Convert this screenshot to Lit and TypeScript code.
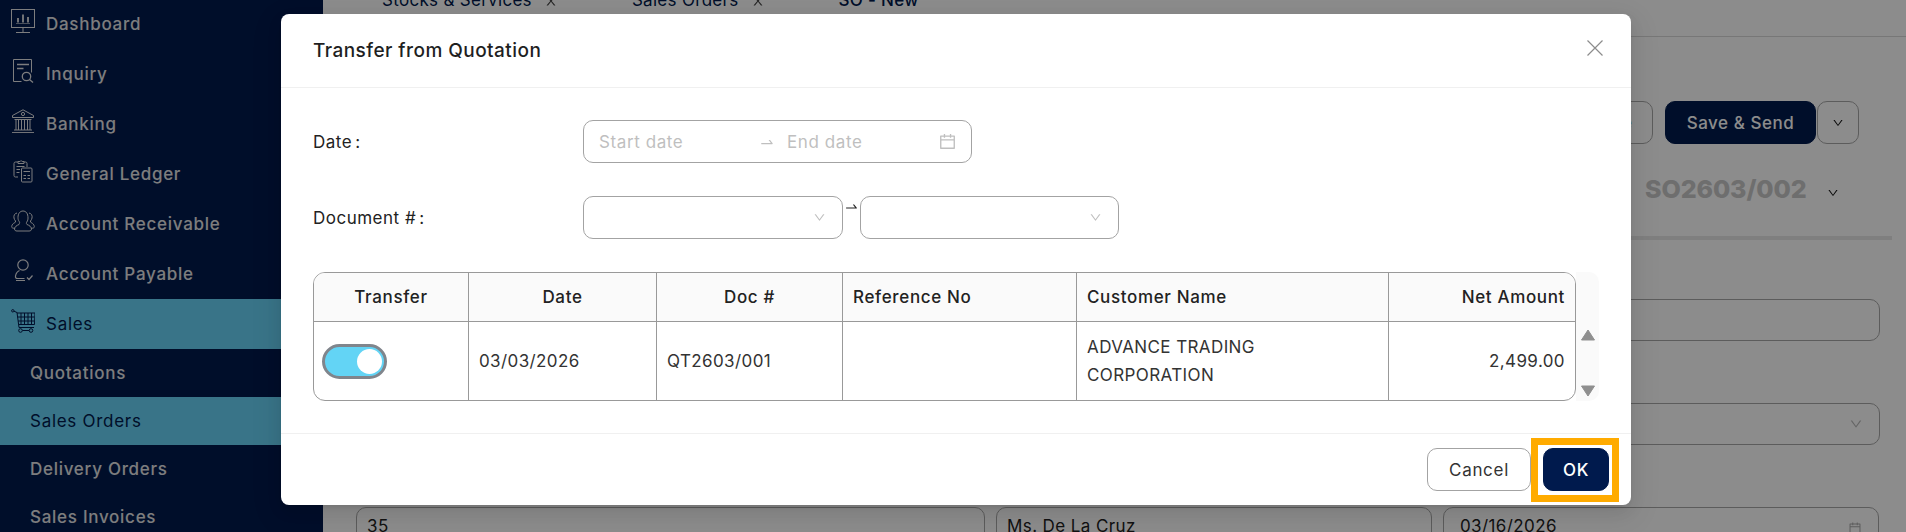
import { LitElement, html, css, svg } from "lit";
import { customElement } from "lit/decorators.js";

const ant = (d: string, cls: string) => html`<svg class=${cls} viewBox="0 0 1024 1024" fill="currentColor"><path d=${d}></path></svg>`;
const SWAP = "M873.1 596.2l-164-208A32 32 0 0 0 684 376h-64.8c-6.7 0-10.4 7.7-6.3 13l144.3 183H152c-4.4 0-8 3.6-8 8v60c0 4.4 3.6 8 8 8h695.9c26.8 0 41.7-30.8 25.2-51.8z";
const CAL = "M880 184H712v-64c0-4.4-3.6-8-8-8h-56c-4.4 0-8 3.6-8 8v64H384v-64c0-4.4-3.6-8-8-8h-56c-4.4 0-8 3.6-8 8v64H144c-17.7 0-32 14.3-32 32v664c0 17.7 14.3 32 32 32h736c17.7 0 32-14.3 32-32V216c0-17.7-14.3-32-32-32zm-40 656H184V460h656v380zM184 392V256h128v48c0 4.4 3.6 8 8 8h56c4.4 0 8-3.6 8-8v-48h256v48c0 4.4 3.6 8 8 8h56c4.4 0 8-3.6 8-8v-48h128v136H184z";
const DOWN = "M884 256h-75c-5.1 0-9.9 2.5-12.9 6.6L512 654.2 227.9 262.6c-3-4.1-7.8-6.6-12.9-6.6h-75c-6.5 0-10.3 7.4-6.5 12.7l352.6 486.1c12.8 17.6 39 17.6 51.7 0l352.6-486.1c3.9-5.3.1-12.7-6.4-12.7z";
const CLOSE = "M563.8 512l262.5-312.9c4.4-5.2.7-13.1-6.1-13.1h-79.8c-4.7 0-9.2 2.1-12.3 5.7L511.6 449.8 295.1 191.7c-3-3.6-7.5-5.7-12.3-5.7H203c-6.8 0-10.5 7.9-6.1 13.1L459.4 512 196.9 824.9A7.95 7.95 0 0 0 203 838h79.8c4.7 0 9.2-2.1 12.3-5.7l216.5-258.1 216.5 258.1c3 3.6 7.5 5.7 12.3 5.7h79.8c6.8 0 10.5-7.9 6.1-13.1L563.8 512z";

const icons: Record<string, unknown> = {
  dashboard: svg`<rect x="0.5" y="0.5" width="23" height="18"/><path d="M12 18.5v4.5M5 23.500h14"/><path d="M7 13.500V9M12 13.500V5.500M17 13.500V8" stroke-width="1.800"/><path d="M5 14.500h14" stroke-width=".6"/>`,
  inquiry: svg`<path d="M10.500 22.500H2.500V.5h18v13"/><path d="M6 5.500h12M6 9.500h6.500" stroke-width="1.300"/><circle cx="15.500" cy="17.500" r="4.200" stroke-width="1.300"/><path d="M18.500 20.500l3.500 3" stroke-width="1.300"/>`,
  banking: svg`<path d="M12 .8L1.500 6.500v2h21v-2z"/><circle cx="12" cy="5" r="1.600"/><path d="M3.500 10.500h17M3 21h18M1 23.600h22M5 10.500V21M7.500 10.500V21M10.500 10.500V21M13.500 10.500V21M16.500 10.500V21M19 10.500V21"/>`,
  ledger: svg`<path d="M7 18H4.500A1.500 1.500 0 0 1 3 16.500V4.500A1.500 1.500 0 0 1 4.500 3H7M13 3h1.500A1.500 1.500 0 0 1 16 4.500V8"/><path d="M7 4.500V2.500h2a1.200 1.200 0 0 1 2.200 0H13v2z"/><path d="M5.500 7.500h8M5.500 10.500h3.500M5.500 13.500h3"/><rect x="10.500" y="9" width="10.500" height="14" rx="1"/><path d="M12.500 12.500h6.500M12.500 16.500h2.500M16.500 16.500h2.500M12.500 19.500h2.500M16.500 19.500h2.500"/>`,
  ar: svg`<path d="M8 15.500c-2.500 1-4 2-4.500 4.500.2 1.500 1 2 2.500 2h12c1.500 0 2.300-.5 2.500-2-.5-2.500-2-3.500-4.500-4.500-.8-.8-.8-1.500-.2-2.500 1-1.500 1.200-2.500 1.200-4C17 4.500 15 2 12 2S7 4.500 7 8.500c0 1.500.2 2.500 1.200 4 .6 1 .6 1.700-.2 2.500z"/><path d="M6 4C3.500 4.500 2.500 6.500 3 9c.2 1 .7 2 1.500 3 .2.800 0 1.300-.7 1.700C2 14.500 1 15.500.7 17.500c0 1 .5 1.700 1.800 1.700h1.500M18 4c2.500.5 3.500 2.500 3 5-.2 1-.7 2-1.500 3-.2.800 0 1.300.7 1.700 1.800.8 2.800 1.800 3.100 3.800 0 1-.5 1.700-1.800 1.700H20"/>`,
  ap: svg`<circle cx="12" cy="6" r="5.200" stroke-width="1.200"/><path d="M8.500 11.500c-2.500 1-3.500 3-4 5.500-.2 1.500.3 2.500 2 2.500h7" stroke-width="1.200"/><path d="M5 21.500h9M16 18.500l2 2 3.500-4" stroke-width="1.200"/>`,
  cart: svg`<circle cx="1.800" cy="1.800" r="1.200"/><path d="M3 2.200l3 1.300 2 15h15"/><path d="M6 4h18l-.5 11.500H8M10 4v11.500M13.500 4v11.500M17 4v11.500M20.500 4v11.500M6.500 8h17M7 12h16.500"/><circle cx="9.500" cy="21.500" r="1.800"/><circle cx="20" cy="21.500" r="1.800"/><path d="M11.500 21.500h6.500"/>`,
};

const menu = [
  ["Dashboard", "dashboard"], ["Inquiry", "inquiry"], ["Banking", "banking"], ["General Ledger", "ledger"],
  ["Account Receivable", "ar"], ["Account Payable", "ap"], ["Sales", "cart", true],
];
const subs = [["Quotations"], ["Sales Orders", true], ["Delivery Orders"], ["Sales Invoices"]];

@customElement("app-root")
export class AppRoot extends LitElement {
  static styles = css`
    :host { display: block; position: relative; width: 1906px; height: 532px; overflow: hidden; background: #fff;
      font-family: "Inter", "Noto Sans", sans-serif; font-size: 16px; color: #222; }
    * { box-sizing: border-box; }
    .page { display: flex; height: 532px; }
    .side { width: 323px; flex: none; background: #001a4d; color: #e4e4e6; font-size: 17px; font-weight: 500; letter-spacing: .72px; overflow: hidden; }
    .list { margin-top: -1px; }
    .item { display: flex; align-items: center; height: 50px; padding-left: 11px; gap: 11px; }
    .item svg { width: 24px; height: 24px; flex: none; margin-bottom: 6px; fill: none; stroke: currentColor; stroke-width: 1; }
    .item.on, .sub.on { background: #69d3f7; color: #001a4d; font-weight: 400; }
    .sub { display: flex; align-items: center; height: 48px; padding-left: 30px; }
    .main { flex: 1; min-width: 0; display: flex; flex-direction: column; }
    .tabs { display: flex; height: 49px; margin-top: -12px; padding-left: 59px; border-bottom: 1px solid #d9d9d9; line-height: 24px; color: #001a4d; font-size: 17px; letter-spacing: .3px; flex: none; }
    .tab { display: flex; gap: 12px; margin-right: 74px; }
    .tab svg { width: 14px; height: 14px; margin-top: 6px; color: #444; }
    .tab.cur { font-weight: 500; }
    .tools { display: flex; justify-content: flex-end; align-items: center; gap: 1px; margin-top: 64px; padding-right: 47px; height: 43px; flex: none; }
    .btn { height: 43px; border: 1px solid #a8a8a8; border-radius: 10px; display: flex; align-items: center; justify-content: center; background: #fff; font-size: 17px; }
    .btn.ghost { width: 120px; justify-content: flex-end; padding-right: 20px; color: #1677ff; margin-right: 11px; }
    .btn.save { width: 151px; background: #001a4d; color: #fff; border-color: #001a4d; font-weight: 500; letter-spacing: .55px; }
    .btn.more { width: 42px; }
    .btn.more svg, .sono svg { width: 12px; height: 12px; color: #111; }
    .sono { display: flex; justify-content: flex-end; align-items: center; padding-right: 67px; height: 36px; margin-top: 27px; gap: 22px; font-size: 25px; font-weight: 800; color: #c8c8c8; flex: none; }
    .sono span { width: 160px; letter-spacing: -.1px; }
    .sono svg { margin-top: 7px; }
    .strip { height: 4px; background: #e8e8e8; margin: 29px 14px 0 0; flex: none; }
    .form { padding: 59px 26px 0 33px; display: flex; flex-direction: column; }
    .box { height: 42px; border: 1px solid #a8a8a8; border-radius: 10px; padding: 0 16px 0 10px; display: flex; align-items: center; justify-content: flex-end; font-size: 17px; flex: none; color: #222; letter-spacing: .4px; }
    .box span { flex: 1; }
    .box svg { width: 14px; height: 14px; color: #b8b8b8; }
    .form .b2 { margin-top: 62px; }
    .row3 { display: grid; grid-template-columns: 629px 436px 436px; gap: 11px; margin-top: 62px; }
    .row3 .box { height: 48px; align-items: flex-start; padding-top: 8px; }
    .row3 .box svg { color: #a8a8a8; margin-top: 5px; }
    .mask { position: absolute; inset: 0; background: rgba(0,0,0,.45); }
    .modal { position: absolute; left: 281px; top: 14px; width: 1350px; height: 491px; background: #fff; border-radius: 8px; display: flex; flex-direction: column;
      box-shadow: 0 6px 16px 0 rgba(0,0,0,.08), 0 3px 6px -4px rgba(0,0,0,.12), 0 9px 28px 8px rgba(0,0,0,.05); }
    .mhead { height: 74px; flex: none; border-bottom: 1px solid #f0f0f0; display: flex; align-items: center; justify-content: space-between; padding: 0 28px 0 32px; font-size: 19px; font-weight: 450; letter-spacing: .45px; color: #1f1f1f; }
    .mhead svg { width: 16px; height: 16px; margin-bottom: 6px; fill: none; stroke: #8c8c8c; stroke-width: 1.200; }
    .mbody { flex: 1; padding: 32px 33px 0 32px; display: flex; flex-direction: column; gap: 33px; border-bottom: 1px solid #f0f0f0; }
    .frow { display: flex; align-items: center; height: 43px; flex: none; }
    .lab { width: 270px; flex: none; font-size: 17px; letter-spacing: .5px; }
    .lab i { font-style: normal; margin-left: 3px; }
    .inp { height: 43px; border: 1px solid #a3a3a3; border-radius: 10px; display: flex; align-items: center; flex: none; font-size: 17px; color: #bfbfbf; letter-spacing: .6px; }
    .range { width: 389px; padding: 0 14px 0 15px; }
    .range .s { width: 160px; }
    .range .e { flex: 1; }
    .range .sw { width: 16px; height: 16px; margin-right: 12px; }
    .range .cal { width: 19px; height: 19px; }
    .sel { justify-content: flex-end; padding-right: 16px; }
    .sel svg { width: 13px; height: 13px; }
    .sep { width: 17px; height: 43px; color: #222; display: flex; justify-content: center; flex: none; }
    .sep svg { width: 15px; height: 15px; margin-top: 3px; }
    .tw { display: flex; flex: none; }
    .tbl { width: 1263px; border: 1px solid #999; border-radius: 12px; overflow: hidden; flex: none; }
    table { width: 100%; border-collapse: separate; border-spacing: 0; table-layout: fixed; }
    th, td { border-left: 1px solid #999; padding: 0 10px; text-align: left; font-size: 17px; }
    th:first-child, td:first-child { border-left: 0; }
    th { height: 49px; background: #fafafa; font-weight: 450; color: #222; border-bottom: 1px solid #999; letter-spacing: .65px; }
    td { height: 78px; font-weight: 400; line-height: 28px; color: #333; letter-spacing: .4px; }
    .c { text-align: center; } .r { text-align: right; }
    .sw-t { width: 65px; height: 35px; border-radius: 18px; background: #63d4f5; border: 3px solid #80858c; display: flex; justify-content: flex-end; align-items: center; padding-right: 2px; margin-left: -2px; }
    .sw-t b { width: 25px; height: 25px; background: #fff; border-radius: 50%; display: block; }
    .sb { width: 23px; flex: none; background: #fafafa; border-radius: 0 10px 10px 0; display: flex; flex-direction: column; align-items: center; justify-content: flex-end; gap: 44px; padding: 0 0 4px; }
    .sb svg { width: 16px; height: 12px; fill: #8f8f8f; display: block; }
    .mfoot { height: 71px; flex: none; display: flex; justify-content: flex-end; align-items: center; gap: 12px; padding: 0 22px 0 0; }
    .mbtn { height: 43px; border-radius: 10px; border: 1px solid #a3a3a3; display: flex; align-items: center; justify-content: center; font-size: 17px; position: relative; background: #fff; letter-spacing: .7px; }
    .cancel { width: 104px; color: #333; }
    .ok { width: 66px; background: #001a4d; color: #fff; border-color: #001a4d; font-weight: 500; }
    .ok::after { content: ""; position: absolute; left: -13px; right: -11px; top: -11px; bottom: -12px; border: 7px solid #ffab00; }
  `;

  render() {
    return html`
      <div class="page">
        <nav class="side"><div class="list">
          ${menu.map(([t, i, on]) => html`<div class="item ${on ? "on" : ""}"><svg viewBox="0 0 24 24">${icons[i as string]}</svg><span>${t}</span></div>`)}
          ${subs.map(([t, on]) => html`<div class="sub ${on ? "on" : ""}">${t}</div>`)}
        </div></nav>
        <main class="main">
          <div class="tabs">
            <div class="tab"><span>Stocks &amp; Services</span>${ant(CLOSE, "")}</div>
            <div class="tab"><span>Sales Orders</span>${ant(CLOSE, "")}</div>
            <div class="tab cur"><span>SO - New</span></div>
          </div>
          <div class="tools">
            <div class="btn ghost">Save</div>
            <div class="btn save">Save &amp; Send</div>
            <div class="btn more">${ant(DOWN, "")}</div>
          </div>
          <div class="sono"><span>SO2603/002</span>${ant(DOWN, "")}</div>
          <div class="strip"></div>
          <div class="form">
            <div class="box"></div>
            <div class="box b2">${ant(DOWN, "")}</div>
            <div class="row3">
              <div class="box"><span>35</span></div>
              <div class="box"><span>Ms. De La Cruz</span></div>
              <div class="box" style="padding-left:16px"><span>03/16/2026</span>${ant(CAL, "")}</div>
            </div>
          </div>
        </main>
      </div>
      <div class="mask"></div>
      <section class="modal">
        <header class="mhead"><span>Transfer from Quotation</span><svg viewBox="0 0 16 16"><path d="M.5.5l15 15M15.500.5l-15 15"></path></svg></header>
        <div class="mbody">
          <div class="frow"><div class="lab">Date<i>:</i></div>
            <div class="inp range"><span class="s">Start date</span>${ant(SWAP, "sw")}<span class="e">End date</span>${ant(CAL, "cal")}</div>
          </div>
          <div class="frow"><div class="lab">Document #<i>:</i></div>
            <div class="inp sel" style="width:260px">${ant(DOWN, "")}</div>
            <div class="sep">${ant(SWAP, "")}</div>
            <div class="inp sel" style="width:259px">${ant(DOWN, "")}</div>
          </div>
          <div class="tw">
            <div class="tbl"><table>
              <colgroup><col style="width:154px"><col style="width:188px"><col style="width:186px"><col style="width:234px"><col style="width:312px"><col></colgroup>
              <thead><tr><th class="c">Transfer</th><th class="c">Date</th><th class="c">Doc #</th><th>Reference No</th><th>Customer Name</th><th class="r">Net Amount</th></tr></thead>
              <tbody><tr>
                <td><div class="sw-t"><b></b></div></td><td>03/03/2026</td><td>QT2603/001</td><td></td><td>ADVANCE TRADING<br>CORPORATION</td><td class="r">2,499.00</td>
              </tr></tbody>
            </table></div>
            <div class="sb">
              <svg viewBox="0 0 16 12"><path d="M8 1l6.500 10h-13z" stroke="#8f8f8f" stroke-linejoin="round"/></svg>
              <svg viewBox="0 0 16 12"><path d="M8 11L1.500 1h13z" stroke="#8f8f8f" stroke-linejoin="round"/></svg>
            </div>
          </div>
        </div>
        <footer class="mfoot"><div class="mbtn cancel">Cancel</div><div class="mbtn ok">OK</div></footer>
      </section>
    `;
  }
}
